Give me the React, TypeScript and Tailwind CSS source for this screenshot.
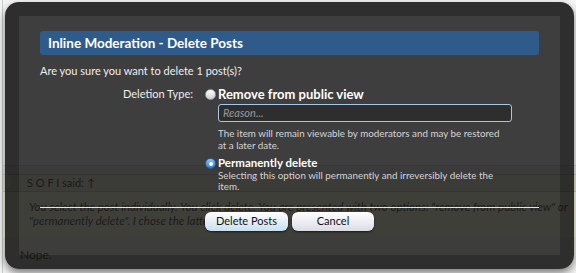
import React from 'react';

const font = { fontFamily: 'Lato, "Open Sans", sans-serif' };

const Radio: React.FC<{ checked?: boolean }> = ({ checked }) =>
  checked ? (
    <span className="mt-[2px] flex h-[11px] w-[11px] shrink-0 items-center justify-center rounded-full border border-[#2a5e9c] bg-gradient-to-b from-[#8cc4f4] to-[#2f7ad0]">
      <span className="h-[4px] w-[4px] rounded-full bg-white" />
    </span>
  ) : (
    <span className="mt-[2px] h-[11px] w-[11px] shrink-0 rounded-full border border-[#9a9a9a] bg-gradient-to-b from-white to-[#cfcfcf]" />
  );

export default function App() {
  return (
    <div className="relative h-[273px] w-[576px] overflow-hidden bg-[#f5f5f5]" style={font}>
      {/* Page behind the overlay */}
      <div className="ml-[2px] h-full border-l border-[#c8ccc8]">
        <div className="h-[165px]" />
        <div className="relative border-t border-[#d8d8d8] bg-[#ececec]">
          <div className="h-[8px]" />
          <div className="relative border-y border-[#d4d4c4] bg-[#ececdc]">
            <span className="absolute left-[3px] top-[-3px] h-0 w-0 border-y-[9px] border-l-[7px] border-y-transparent border-l-white" />
            <div className="flex h-[16px] items-center pl-[24px] text-[11px] text-[#6a6a60]">S O F I said: ↑</div>
          </div>
          <div className="whitespace-nowrap bg-[#fcfce8] pb-[9px] pl-[26px] pt-[8px] text-[11.5px] italic leading-[14px] text-[#707068]">
            <p>You select the post individually. You click delete. You are presented with two options: "remove from public view" or</p>
            <p>"permanently delete". I chose the latter.</p>
          </div>
        </div>
        <div className="bg-[#f4f4ec] pl-[17px] pt-[11px] text-[12px] leading-[14px] text-[#707068]">Nope.</div>
      </div>

      {/* Overlay */}
      <div className="absolute left-[5px] top-[2px] h-[267px] w-[569px] rounded-[14px] border-[14px] border-black/25 bg-black/75 shadow-[0_4px_8px_rgba(0,0,0,0.5)]">
        <div className="px-[21px] pt-[15px] text-[#eeeeee]">
          <div className="flex h-[24px] items-center rounded-[3px] bg-[#2f5b8b] px-[8px] text-[13.5px] font-bold text-white">
            Inline Moderation - Delete Posts
          </div>

          <p className="mt-[9px] text-[11px] leading-[14px]">Are you sure you want to delete 1 post(s)?</p>

          <div className="mt-[9px] flex">
            <div className="w-[153px] text-right text-[11px] leading-[14px]">Deletion Type:</div>
            <div className="ml-[12px] flex flex-col">
              <div className="flex">
                <Radio />
                <div className="ml-[2px] flex flex-col">
                  <span className="text-[13px] font-bold leading-[14px] text-white">Remove from public view</span>
                  <div className="mt-[3px] flex h-[18px] w-[294px] items-center rounded-[3px] border border-[#a9c6e4] bg-[#2e2e2e] px-[4px] text-[11px] italic text-[#9a9a9a]">
                    Reason...
                  </div>
                  <p className="mt-[5px] text-[9.8px] leading-[12px] text-[#d4d4d4]">
                    The item will remain viewable by moderators and may be restored
                    <br />
                    at a later date.
                  </p>
                </div>
              </div>
              <div className="mt-[5px] flex">
                <Radio checked />
                <div className="ml-[2px] flex flex-col">
                  <span className="text-[11.5px] font-bold leading-[14px] text-white">Permanently delete</span>
                  <p className="text-[9.8px] leading-[11px] text-[#d4d4d4]">
                    Selecting this option will permanently and irreversibly delete the
                    <br />
                    item.
                  </p>
                </div>
              </div>
            </div>
          </div>

          <div className="mt-[15px] h-px bg-[#dfe7ee]" />

          <div className="mt-[4px] flex gap-[4px] pl-[165px]">
            <button className="flex h-[19px] w-[83px] items-center justify-center rounded-[6px] bg-gradient-to-b from-white to-[#c9dff0] text-[11px] text-[#111] shadow-[0_1px_2px_rgba(0,0,0,0.6)]">
              Delete Posts
            </button>
            <button className="flex h-[19px] w-[82px] items-center justify-center rounded-[6px] bg-gradient-to-b from-white to-[#dcdce6] text-[11px] text-[#111] shadow-[0_1px_2px_rgba(0,0,0,0.6)]">
              Cancel
            </button>
          </div>
        </div>
      </div>
    </div>
  );
}
